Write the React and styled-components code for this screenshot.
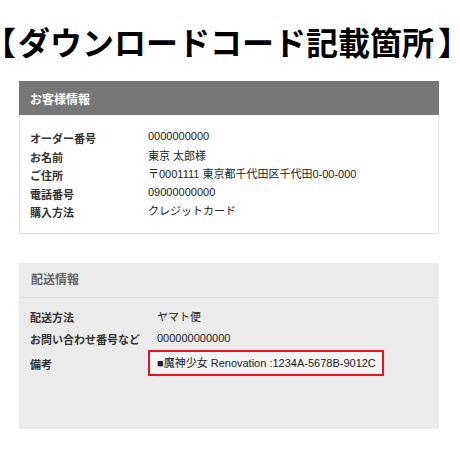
import styled, { createGlobalStyle } from 'styled-components';

const GlobalStyle = createGlobalStyle`
    body {
        margin: 0;
        background: #fff;
        font-family: "Liberation Sans", "Noto Sans CJK JP", sans-serif;
        color: #333;
    }
`;

const customer = [
    ['オーダー番号', '0000000000'],
    ['お名前', '東京 太郎様'],
    ['ご住所', '〒0001111 東京都千代田区千代田0-00-000'],
    ['電話番号', '09000000000'],
    ['購入方法', 'クレジットカード'],
];

const shipping = [
    ['配送方法', 'ヤマト便'],
    ['お問い合わせ番号など', '000000000000'],
    ['備考', '■魔神少女 Renovation :1234A-5678B-9012C', true],
];

const App = () => {
    return (
        <Page>
            <GlobalStyle />
            <Title>
                <Bracket>【</Bracket>ダウンロードコード記載箇所<Bracket $close>】</Bracket>
            </Title>

            <Panel>
                <PanelHead $dark>お客様情報</PanelHead>
                <CustomerBody>
                    {customer.map(([label, value]) => (
                        <CustomerRow key={label}>
                            <Label>{label}</Label>
                            <Value>{value}</Value>
                        </CustomerRow>
                    ))}
                </CustomerBody>
            </Panel>

            <Panel $grey>
                <PanelHead>配送情報</PanelHead>
                <ShippingBody>
                    {shipping.map(([label, value, mark]) => (
                        <ShippingRow key={label}>
                            <Label>{label}</Label>
                            <Note $mark={mark}>{value}</Note>
                        </ShippingRow>
                    ))}
                </ShippingBody>
            </Panel>
        </Page>
    );
}

const Page = styled.div`
    width: 460px;
    height: 460px;
    display: flex;
    flex-direction: column;
    overflow: hidden;
`

const Title = styled.h1`
    margin: 20px 0 0 0;
    height: 61px;
    font-family: "Noto Sans CJK JP", sans-serif;
    font-size: 32px;
    font-weight: 700;
    line-height: 42px;
    color: #000;
    white-space: nowrap;
`

const Bracket = styled.span`
    font-feature-settings: "halt";
    margin: ${p => p.$close ? '0 0 0 4px' : '0 2px 0 0'};
`

const Panel = styled.section`
    margin: 0 21px 0 19px;
    background: ${p => p.$grey ? '#ebebeb' : '#fff'};
    border: ${p => p.$grey ? 'none' : '1px solid #e2e2e2'};
    border-top: none;
    & + & {
        margin-top: 29px;
        height: 166px;
    }
`

const PanelHead = styled.div`
    height: ${p => p.$dark ? '34px' : '35px'};
    display: flex;
    align-items: center;
    box-sizing: border-box;
    padding-left: ${p => p.$dark ? '11px' : '12px'};
    padding-bottom: ${p => p.$dark ? '0' : '3px'};
    margin: ${p => p.$dark ? '0 -1px' : '0'};
    background: ${p => p.$dark ? '#777' : 'transparent'};
    color: ${p => p.$dark ? '#fff' : '#666'};
    border-bottom: ${p => p.$dark ? 'none' : '1px solid #e0e0e0'};
    font-family: "Noto Sans CJK JP", sans-serif;
    font-size: 12px;
    font-weight: 700;
`

const CustomerBody = styled.div`
    padding: 13px 10px 12px;
`

const CustomerRow = styled.div`
    display: grid;
    grid-template-columns: 118px 1fr;
    height: 18.5px;
    align-items: center;
`

const Label = styled.div`
    font-family: "Noto Sans CJK JP", sans-serif;
    font-size: 11px;
    font-weight: 700;
    color: #333;
    white-space: nowrap;
    padding-top: 2px;
`

const Value = styled.div`
    font-size: 11px;
    color: #222;
    white-space: nowrap;
    padding-bottom: 2px;
`

const ShippingBody = styled.div`
    padding: 7px 11px;
`

const ShippingRow = styled.div`
    display: grid;
    grid-template-columns: 118px auto 1fr;
    height: 22.5px;
    align-items: center;
`

const Note = styled.div`
    justify-self: start;
    font-size: 11px;
    color: #222;
    white-space: nowrap;
    box-sizing: border-box;
    padding: ${p => p.$mark ? '0 6px 0 7px' : '0 0 0 9px'};
    border: ${p => p.$mark ? '2px solid #e5141e' : 'none'};
    background: ${p => p.$mark ? '#f4f4f4' : 'transparent'};
    height: ${p => p.$mark ? '26px' : 'auto'};
    line-height: ${p => p.$mark ? '22px' : 'normal'};
`

export default App;
